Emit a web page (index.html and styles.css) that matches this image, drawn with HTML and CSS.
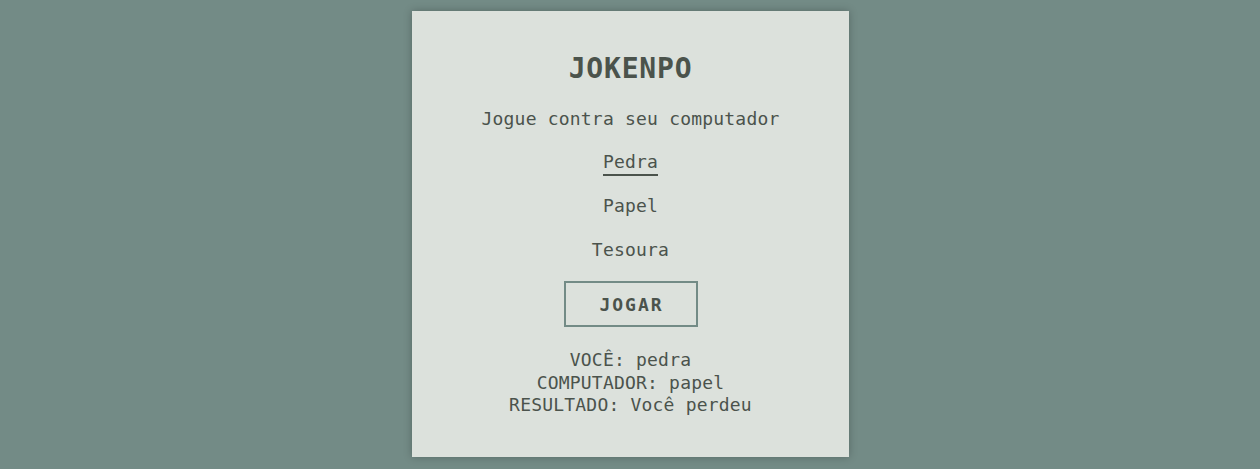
FILE: index.html
```html
<!DOCTYPE html>
<html lang="pt-BR">
<head>
<meta charset="utf-8">
<title>Jokenpo</title>
<link rel="stylesheet" href="styles.css">
</head>
<body>
<main class="card">
  <h1 class="title">JOKENPO</h1>
  <p class="subtitle">Jogue contra seu computador</p>
  <div class="options">
    <span class="option selected">Pedra</span>
    <span class="option">Papel</span>
    <span class="option">Tesoura</span>
  </div>
  <button class="play">JOGAR</button>
  <div class="results">
    <div>VOCÊ: pedra</div>
    <div>COMPUTADOR: papel</div>
    <div>RESULTADO: Você perdeu</div>
  </div>
</main>
</body>
</html>
```

FILE: styles.css
```css
html, body {
  margin: 0;
  padding: 0;
}
body {
  background: #738b86;
  display: flex;
  justify-content: center;
  padding-top: 11px;
  height: 469px;
  box-sizing: border-box;
  font-family: "DejaVu Sans Mono", "Liberation Mono", monospace;
  color: #4b534c;
}
.card {
  box-sizing: border-box;
  width: 437px;
  height: 446px;
  margin-left: 1px;
  background: #dce1dc;
  box-shadow: 0 0 8px rgba(0, 0, 0, 0.25);
  padding-top: 41px;
  display: flex;
  flex-direction: column;
  align-items: center;
}
.title {
  margin: 0;
  font-size: 28px;
  line-height: 34px;
  font-weight: bold;
  letter-spacing: 0.8px;
}
.subtitle {
  margin: 21px 0 0;
  font-size: 18px;
  line-height: 24px;
  letter-spacing: 0.2px;
}
.options {
  margin-top: 19px;
  display: flex;
  flex-direction: column;
  align-items: center;
  gap: 18px;
}
.option {
  font-size: 18px;
  line-height: 24px;
  letter-spacing: 0.2px;
  border-bottom: 2px solid transparent;
}
.option.selected {
  border-bottom-color: #4b534c;
}
.play {
  margin-top: 17px;
  width: 134px;
  height: 46px;
  box-sizing: border-box;
  border: 2px solid #738b86;
  background: transparent;
  font-family: inherit;
  color: inherit;
  font-size: 18px;
  font-weight: bold;
  letter-spacing: 2px;
  padding: 0 0 0 2px;
}
.results {
  margin-top: 22px;
  font-size: 18px;
  line-height: 22.5px;
  letter-spacing: 0.2px;
  text-align: center;
}
```
